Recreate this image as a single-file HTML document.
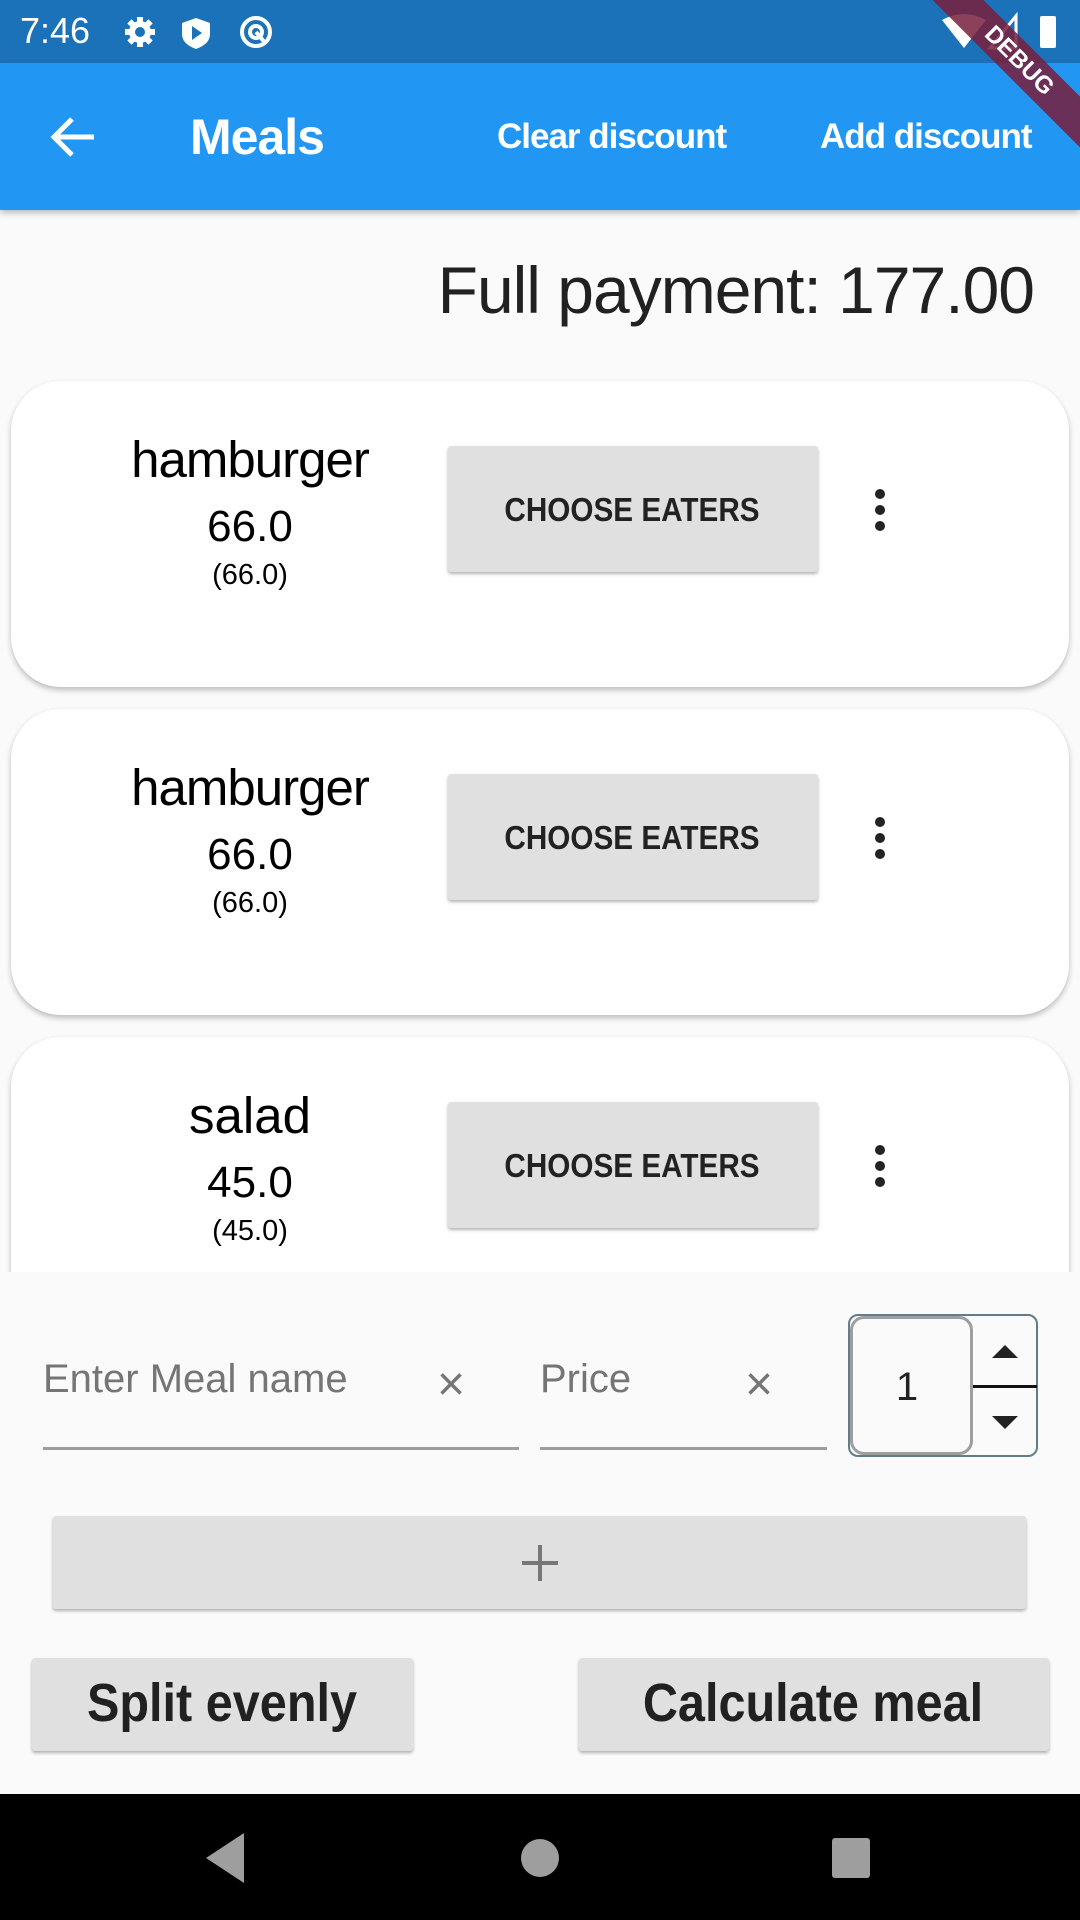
<!DOCTYPE html>
<html><head><meta charset="utf-8"><style>
*{margin:0;padding:0;box-sizing:border-box}
body{width:1080px;height:1920px;overflow:hidden;background:#fafafa;font-family:"Liberation Sans",sans-serif;position:relative}
.a{position:absolute}
.c{position:absolute;white-space:nowrap;transform:translateX(-50%)}
.card{position:absolute;left:11px;width:1058px;height:306px;background:#fff;border-radius:50px;box-shadow:0 3px 6px rgba(0,0,0,.25)}
.btn{position:absolute;background:#e0e0e0;box-shadow:0 2px 3px rgba(0,0,0,.3);border-radius:3px}
.dot{position:absolute;width:10px;height:10px;border-radius:50%;background:#222}
.ce{position:absolute;white-space:nowrap;transform:translateX(-50%) scaleX(.9);font-size:33px;font-weight:bold;color:#222}
.big{position:absolute;white-space:nowrap;transform:translateX(-50%) scaleX(.9);font-size:54px;font-weight:bold;color:#212121}
</style></head><body>
<div class="a" style="left:0;top:0;width:1080px;height:63px;background:#1b72b9"></div>
<div class="a" style="left:20px;top:10px;color:#fff;font-size:36px">7:46</div>
<svg class="a" style="left:120px;top:14px" width="160" height="36" viewBox="0 0 160 36">
<g fill="#fff"><rect x="17" y="3" width="6" height="30"/><rect x="5" y="15" width="30" height="6"/><rect x="17" y="3" width="6" height="30" transform="rotate(45 20 18)"/><rect x="17" y="3" width="6" height="30" transform="rotate(-45 20 18)"/></g>
<circle cx="20" cy="18" r="11" fill="#fff"/><circle cx="20" cy="18" r="5" fill="#1b72b9"/>
<path d="M76 4 L90 9 L90 20 Q90 30 76 35 Q62 30 62 20 L62 9 Z" fill="#fff"/><path d="M72 12 L82 19 L72 26Z" fill="#1b72b9"/>
<circle cx="136" cy="18" r="14" fill="none" stroke="#fff" stroke-width="4"/><circle cx="136" cy="18" r="6" fill="none" stroke="#fff" stroke-width="4"/><path d="M136 18 L146 30" stroke="#fff" stroke-width="4"/>
</svg>
<svg class="a" style="left:940px;top:12px" width="130" height="40" viewBox="0 0 130 40">
<path d="M2 8 Q24 -4 46 8 L24 36Z" fill="#fff"/><path d="M76 4 L76 36 L50 36Z" fill="none" stroke="#fff" stroke-width="3"/>
<rect x="100" y="4" width="16" height="32" rx="2" fill="#fff"/>
</svg>
<div class="a" style="left:0;top:63px;width:1080px;height:147px;background:#2196f3;box-shadow:0 3px 6px rgba(0,0,0,.25)"></div>
<svg class="a" style="left:50px;top:116px" width="46" height="42" viewBox="0 0 46 42"><path d="M44 21 H4 M22 3 L4 21 L22 39" stroke="#fff" stroke-width="5" fill="none"/></svg>
<div class="a" style="left:190px;top:108px;color:#fff;font-size:50px;font-weight:bold;letter-spacing:-1px">Meals</div>
<div class="a" style="left:497px;top:117px;color:#fff;font-size:35px;font-weight:bold;letter-spacing:-1px">Clear discount</div>
<div class="a" style="left:820px;top:117px;color:#fff;font-size:35px;font-weight:bold;letter-spacing:-1px">Add discount</div>
<div class="a" style="left:869px;top:43px;width:300px;height:36px;background:rgba(120,30,60,.85);transform:rotate(45deg);color:#fff;font-weight:bold;font-size:24px;text-align:center;line-height:36px">DEBUG</div>
<div class="a" style="right:46px;top:252px;font-size:66px;color:#212121;letter-spacing:-1px">Full payment: 177.00</div>

<div class="card" style="top:381px"></div>
<div class="card" style="top:709px"></div>
<div class="card" style="top:1037px"></div>

<div class="c" style="left:250px;top:430px;font-size:51px;letter-spacing:-1px">hamburger</div>
<div class="c" style="left:250px;top:502px;font-size:44px">66.0</div>
<div class="c" style="left:250px;top:559px;font-size:29px">(66.0)</div>
<div class="btn" style="left:448px;top:446px;width:370px;height:126px"></div>
<div class="ce" style="left:632px;top:491px">CHOOSE EATERS</div>
<div class="dot" style="left:875px;top:489px"></div><div class="dot" style="left:875px;top:505px"></div><div class="dot" style="left:875px;top:521px"></div>

<div class="c" style="left:250px;top:758px;font-size:51px;letter-spacing:-1px">hamburger</div>
<div class="c" style="left:250px;top:830px;font-size:44px">66.0</div>
<div class="c" style="left:250px;top:887px;font-size:29px">(66.0)</div>
<div class="btn" style="left:448px;top:774px;width:370px;height:126px"></div>
<div class="ce" style="left:632px;top:819px">CHOOSE EATERS</div>
<div class="dot" style="left:875px;top:817px"></div><div class="dot" style="left:875px;top:833px"></div><div class="dot" style="left:875px;top:849px"></div>

<div class="c" style="left:250px;top:1086px;font-size:51px">salad</div>
<div class="c" style="left:250px;top:1158px;font-size:44px">45.0</div>
<div class="c" style="left:250px;top:1215px;font-size:29px">(45.0)</div>
<div class="btn" style="left:448px;top:1102px;width:370px;height:126px"></div>
<div class="ce" style="left:632px;top:1147px">CHOOSE EATERS</div>
<div class="dot" style="left:875px;top:1145px"></div><div class="dot" style="left:875px;top:1161px"></div><div class="dot" style="left:875px;top:1177px"></div>

<div class="a" style="left:0;top:1272px;width:1080px;height:522px;background:#fafafa"></div>
<div class="a" style="left:43px;top:1357px;font-size:40px;color:#757575">Enter Meal name</div>
<div class="a" style="left:437px;top:1357px;font-size:48px;color:#757575">×</div>
<div class="a" style="left:43px;top:1447px;width:476px;height:3px;background:#9e9e9e"></div>
<div class="a" style="left:540px;top:1357px;font-size:40px;color:#757575">Price</div>
<div class="a" style="left:745px;top:1357px;font-size:48px;color:#757575">×</div>
<div class="a" style="left:540px;top:1447px;width:287px;height:3px;background:#9e9e9e"></div>
<div class="a" style="left:848px;top:1314px;width:190px;height:143px;border:2px solid #607d8b;border-radius:10px"></div>
<div class="a" style="left:850px;top:1316px;width:123px;height:139px;border:3px solid #9e9e9e;border-radius:14px;background:#fafafa"></div>
<div class="c" style="left:907px;top:1365px;font-size:40px;color:#222">1</div>
<div class="a" style="left:973px;top:1385px;width:64px;height:3px;background:#111"></div>
<svg class="a" style="left:990px;top:1344px" width="30" height="86" viewBox="0 0 30 86"><path d="M2 14 L15 1 L28 14Z M2 72 L15 85 L28 72Z" fill="#222"/></svg>
<div class="btn" style="left:53px;top:1516px;width:973px;height:93px"></div>
<svg class="a" style="left:520px;top:1543px" width="40" height="40" viewBox="0 0 40 40"><path d="M20 2 V38 M2 20 H38" stroke="#777" stroke-width="4"/></svg>
<div class="btn" style="left:32px;top:1658px;width:381px;height:93px"></div>
<div class="big" style="left:222px;top:1672px">Split evenly</div>
<div class="btn" style="left:579px;top:1658px;width:470px;height:93px"></div>
<div class="big" style="left:813px;top:1672px">Calculate meal</div>

<div class="a" style="left:0;top:1794px;width:1080px;height:126px;background:#000"></div>
<svg class="a" style="left:200px;top:1830px" width="700" height="56" viewBox="0 0 700 56">
<path d="M44 3 L44 53 L6 28Z" fill="#9e9e9e"/><circle cx="340" cy="28" r="19" fill="#9e9e9e"/><rect x="632" y="8" width="38" height="40" rx="3" fill="#9e9e9e"/>
</svg>
</body></html>
